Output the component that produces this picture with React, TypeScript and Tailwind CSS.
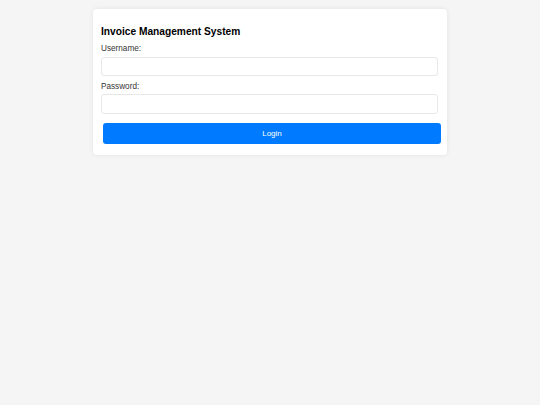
export default function App() {
  return (
    <div className="min-h-[405px] w-full bg-[#f5f5f5] pt-[9px] font-['Liberation_Sans',Arial,sans-serif]">
      <div className="mx-auto w-[354px] rounded-[4px] bg-white px-[8px] pb-[11px] pt-[16px] shadow-[0_0_5px_rgba(0,0,0,0.08)]">
        <h2 className="text-[10.2px] font-bold leading-[13px] text-black">Invoice Management System</h2>
        <label className="mt-[6px] block text-[8.2px] leading-[10px] text-[#333]">Username:</label>
        <input type="text" className="mt-[3px] block h-[19px] w-[337px] rounded-[3px] border border-[#e8e8e8] bg-white outline-none" />
        <label className="mt-[6px] block text-[8.2px] leading-[10px] text-[#333]">Password:</label>
        <input type="password" className="mt-[2px] block h-[20px] w-[337px] rounded-[3px] border border-[#e8e8e8] bg-white outline-none" />
        <button className="ml-[2px] mt-[9px] block h-[21px] w-[338px] rounded-[3px] bg-[#007bff] text-[8px] text-white">
          Login
        </button>
      </div>
    </div>
  );
}
